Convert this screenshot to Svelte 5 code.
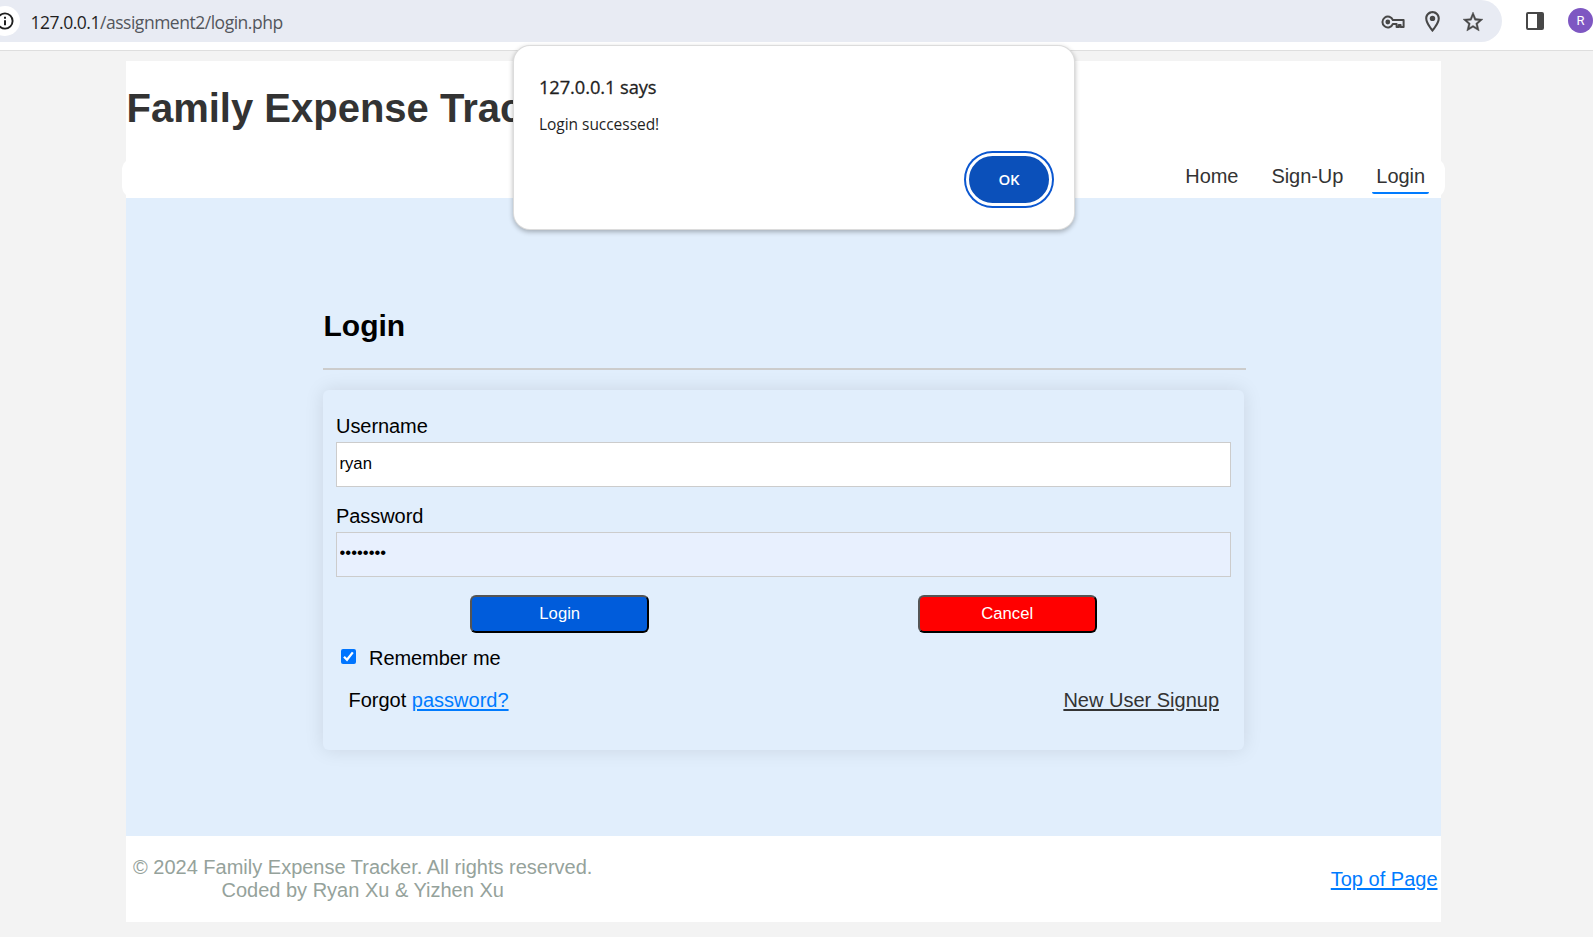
<script>
  let username = $state('ryan');
  let password = $state('password');
  let remember = $state(true);
  const links = ['Home', 'Sign-Up', 'Login'];
</script>

<div class="screen">
  <div class="toolbar">
    <div class="omnibox">
      <span class="info">
        <svg width="20" height="20" viewBox="0 0 20 20"><circle cx="10" cy="10" r="7.6" fill="none" stroke="#1f1f1f" stroke-width="1.9" /><path d="M9 9.2h2v5H9zM9 5.8h2v2H9z" fill="#1f1f1f" /></svg>
      </span>
      <span class="url"><b>127.0.0.1</b>/assignment2/login.php</span>
      <svg class="key" width="24" height="14" viewBox="0 0 24 14"><g fill="none" stroke="#474747" stroke-width="2"><path d="M11.9 5.1A5.4 5.4 0 1 0 11.9 8.9H15.6V12H17.8V9.9H19.6V12H22.6V5.1Z" stroke-linejoin="round" /></g><circle cx="6.8" cy="7" r="2.4" /></svg>
      <svg class="pin" width="25" height="25" viewBox="0 0 24 24"><path d="M12 2C8.13 2 5 5.13 5 9c0 5.25 7 13 7 13s7-7.75 7-13c0-3.87-3.13-7-7-7zM7 9c0-2.76 2.24-5 5-5s5 2.24 5 5c0 2.88-2.88 7.19-5 9.88C9.92 16.21 7 11.85 7 9z" /><circle cx="12" cy="9" r="2.6" /></svg>
      <svg class="star" width="24" height="24" viewBox="0 0 24 24"><path d="M22 9.24l-7.19-.62L12 2 9.19 8.63 2 9.24l5.46 4.73L5.82 21 12 17.27 18.18 21l-1.63-7.03L22 9.24zM12 15.4l-3.76 2.27 1-4.28-3.32-2.88 4.38-.38L12 6.1l1.71 4.04 4.38.38-3.32 2.88 1 4.28L12 15.4z" /></svg>
    </div>
    <svg class="panel" width="18" height="18" viewBox="0 0 18 18"><rect x="1" y="1" width="16" height="16" rx="1" fill="none" stroke="#474747" stroke-width="2" /><path d="M11 1h6v16h-6z" /></svg>
    <span class="avatar">R</span>
  </div>

  <div class="container">
    <header>
      <h1>Family Expense Tracker</h1>
      <nav>
        {#each links as link}
          <a href="#top" class:active={link === 'Login'}>{link}</a>
        {/each}
      </nav>
    </header>

    <main>
      <h2>Login</h2>
      <form>
        <label for="user">Username</label>
        <input id="user" class="field" type="text" bind:value={username} />
        <label for="pass">Password</label>
        <input id="pass" class="field filled" type="password" bind:value={password} />
        <div class="buttons">
          <button type="button">Login</button>
          <button type="button" class="cancel">Cancel</button>
        </div>
        <label class="remember">
          <input type="checkbox" bind:checked={remember} />
          <span class="box">
            {#if remember}
              <svg width="15" height="15" viewBox="0 0 15 15"><path d="M3 7.8l3 3 5.8-7.4" fill="none" stroke="#fff" stroke-width="2.3" /></svg>
            {/if}
          </span>
          Remember me
        </label>
        <div class="extras">
          <span>Forgot <a href="#top">password?</a></span>
          <a class="signup" href="#top">New User Signup</a>
        </div>
      </form>
    </main>

    <footer>
      <p>© 2024 Family Expense Tracker. All rights reserved.<br />Coded by Ryan Xu &amp; Yizhen Xu</p>
      <a href="#top">Top of Page</a>
    </footer>
  </div>

  <div class="dialog" role="alertdialog" aria-labelledby="says">
    <div class="says" id="says">127.0.0.1 says</div>
    <div class="message">Login successed!</div>
    <button type="button" class="ok">OK</button>
  </div>
</div>

<style>
  :global(body) {
    margin: 0;
    background: #f3f3f3;
  }
  * {
    box-sizing: border-box;
  }
  .screen {
    position: relative;
    width: 1593px;
    height: 937px;
    overflow: hidden;
    font: 20px/23px 'Liberation Sans', Arial, sans-serif;
    color: #000;
    background: #f3f3f3;
  }
  .toolbar {
    display: flex;
    height: 51px;
    background: #fff;
    border-bottom: 1px solid #dedede;
  }
  .omnibox {
    display: flex;
    align-items: center;
    width: 1502px;
    height: 42px;
    background: #e8ebf3;
    border-radius: 0 21px 21px 0;
    flex: none;
  }
  svg {
    display: block;
    flex: none;
    fill: #474747;
  }
  .info {
    display: grid;
    place-items: center;
    width: 30px;
    height: 30px;
    margin-left: -10px;
    border-radius: 50%;
    background: #fff;
  }
  .url {
    margin: 1px 0 0 10.5px;
    font: 17.5px/24px 'Open Sans', 'Noto Sans', sans-serif;
    letter-spacing: -0.48px;
    color: #53565c;
    white-space: nowrap;
  }
  .url b {
    font-weight: 400;
    color: #1f1f1f;
  }
  .key {
    margin: 1px 0 0 auto;
  }
  .pin {
    margin: 1px 0 0 15px;
  }
  .star {
    margin: 1px 17px 0 16px;
  }
  .star path {
    stroke: #474747;
    stroke-width: 0.4px;
  }
  .panel {
    margin: 12px 0 0 24px;
  }
  .avatar {
    width: 25px;
    height: 25px;
    margin: 8px 0 0 24px;
    border-radius: 50%;
    background: #7e57c2;
    color: #fff;
    font: 13px/25px Roboto, sans-serif;
    text-align: center;
    flex: none;
  }
  .container {
    display: flex;
    flex-direction: column;
    width: 1315px;
    height: 861px;
    margin: 10px 0 0 126px;
    background: #fff;
  }
  header {
    display: flex;
    flex-direction: column;
    height: 137px;
  }
  h1 {
    margin: 24px 0 0;
    padding-left: 0.5px;
    font-size: 40px;
    line-height: 46px;
    color: #333;
  }
  nav {
    display: flex;
    justify-content: flex-end;
    gap: 25px;
    height: 40px;
    margin: auto -4px 0;
    padding: 6px 16px 4px;
    border-radius: 12px;
    background: #fff;
  }
  nav a {
    padding: 0 4px;
    height: 30px;
    border-bottom: 2px solid transparent;
    border-radius: 2px;
    color: #333;
    text-decoration: none;
    line-height: 24px;
    letter-spacing: -0.05px;
  }
  nav a.active {
    border-color: #007bff;
  }
  main {
    height: 638px;
    padding: 110px 0 0 197px;
    background: #e1eefc;
  }
  h2 {
    width: 923px;
    height: 62px;
    margin: 0 0 20px;
    padding-left: 0.5px;
    border-bottom: 2px solid #ccc;
    font-size: 30px;
    line-height: 35px;
  }
  form {
    display: flex;
    flex-direction: column;
    width: 921px;
    height: 360px;
    padding: 24px 13px 0;
    border-radius: 6px;
    box-shadow: 0 0 19px rgba(0, 0, 0, 0.1);
    background: #e1eefc;
  }
  label {
    height: 28px;
    padding-top: 1px;
    letter-spacing: -0.06px;
  }
  .field {
    height: 45px;
    margin: 0 0 17px;
    padding: 1px 2.5px 2px;
    border: 1px solid #ccc;
    border-radius: 0;
    background: #fff;
    color: #000;
    font: 16.67px 'Liberation Sans', Arial, sans-serif;
    outline: none;
  }
  .filled {
    padding-bottom: 4px;
    background: #e8f0fe;
    margin-bottom: 18px;
  }
  .buttons {
    display: flex;
    justify-content: space-around;
  }
  .buttons button {
    width: 179px;
    height: 38px;
    padding: 0;
    border: 2px solid;
    border-color: #555 #000 #000 #555;
    border-radius: 6px;
    background: #005cdb;
    color: #fff;
    font: 16.67px 'Liberation Sans', Arial, sans-serif;
  }
  .buttons .cancel {
    background: #f00;
  }
  .remember {
    display: flex;
    margin-top: 13px;
    padding-left: 5px;
  }
  .remember input {
    appearance: none;
    width: 0;
    height: 0;
    margin: 0;
  }
  .box {
    width: 15px;
    height: 15px;
    margin: 2px 13px 0 0;
    border-radius: 2px;
    background: #0075ff;
  }
  .extras {
    display: flex;
    justify-content: space-between;
    margin-top: 15px;
    padding: 0 12px 0 12.5px;
  }
  .extras a,
  footer a {
    color: #007bff;
    text-decoration-thickness: 2px;
    text-underline-offset: 2px;
  }
  .extras .signup {
    color: #333;
  }
  footer {
    display: flex;
    justify-content: space-between;
    align-items: center;
    height: 86px;
    padding: 0 3.5px 0 7px;
  }
  footer p {
    margin: 0;
    color: #95a29b;
    text-align: center;
  }
  .dialog {
    position: absolute;
    left: 514px;
    top: 46px;
    display: flex;
    flex-direction: column;
    width: 560px;
    height: 183px;
    padding: 29px 22px 23px 25px;
    border-radius: 16px;
    background: #fff;
    box-shadow: 0 0 0 1px #dcdcdc, 0 2px 5px 1px rgba(0, 0, 0, 0.28);
    font-family: 'Open Sans', 'Noto Sans', sans-serif;
    color: #1f1f1f;
  }
  .says {
    font-size: 18.3px;
    line-height: 24px;
    font-weight: 500;
    letter-spacing: -0.08px;
    -webkit-text-stroke: 0.3px #1f1f1f;
  }
  .message {
    margin-top: 14px;
    font-size: 15.5px;
    line-height: 22px;
    letter-spacing: -0.04px;
  }
  .ok {
    align-self: flex-end;
    width: 86px;
    height: 53px;
    margin-top: auto;
    padding: 0 0 1px;
    border: 3px solid #fff;
    border-radius: 27px;
    background: #0b50ba;
    box-shadow: 0 0 0 2px #0b57d0;
    color: #fff;
    font: 600 15px 'Open Sans', 'Noto Sans', sans-serif;
    letter-spacing: -0.3px;
  }
</style>
